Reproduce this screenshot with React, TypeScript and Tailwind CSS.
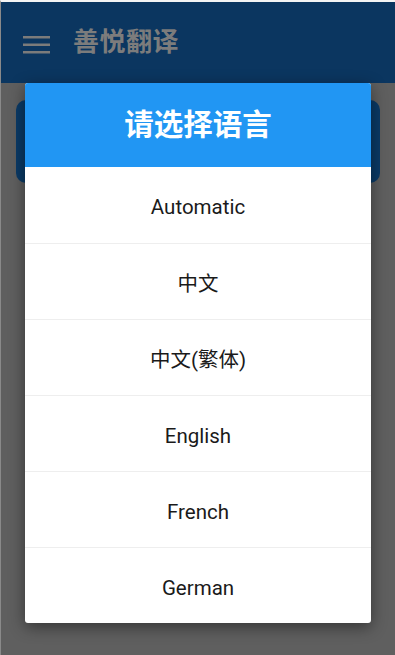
import React from 'react';

const languages = ['Automatic', '中文', '中文(繁体)', 'English', 'French', 'German'];

export default function App() {
  return (
    <div
      className="relative w-[395px] h-[655px] overflow-hidden bg-[#5f5f5f] border-t-2 border-l border-t-[#f4f4f4] border-l-[#8a8a8a]"
      style={{ fontFamily: 'Roboto, "Noto Sans CJK SC", sans-serif' }}
    >
      {/* App bar (dimmed by the dialog overlay) */}
      <div className="h-[81px] bg-[#0b3660] flex items-center pl-[22px]">
        <svg width="27" height="18" viewBox="0 0 27 18" className="mt-[4px]">
          <rect x="0" y="0" width="27" height="2.5" fill="#7b7b7b" />
          <rect x="0" y="7.5" width="27" height="2.5" fill="#7b7b7b" />
          <rect x="0" y="15" width="27" height="2.5" fill="#7b7b7b" />
        </svg>
        <span className="ml-[23px] text-[26px] font-bold text-[#7c7c7c] tracking-[0.5px]">善悦翻译</span>
      </div>

      {/* Content behind overlay */}
      <div className="px-[15px] pt-[17px]">
        <div className="h-[83px] rounded-[10px] bg-[#0a3a66]" />
      </div>

      {/* Language dialog */}
      <div className="absolute left-[24px] top-[81px] w-[346px] rounded-[3px] overflow-hidden bg-white shadow-[0_4px_16px_rgba(0,0,0,0.45)]">
        <div className="h-[84px] bg-[#2196f3] flex items-center justify-center">
          <span className="text-[29.5px] font-bold text-white">请选择语言</span>
        </div>
        {languages.map((lang, i) => (
          <div
            key={lang}
            className={`h-[76px] pt-[5px] flex items-center justify-center text-[20.5px] text-[#1a1a1a] ${i > 0 ? 'border-t border-[#eeeeee]' : ''}`}
          >
            {lang}
          </div>
        ))}
      </div>
    </div>
  );
}
